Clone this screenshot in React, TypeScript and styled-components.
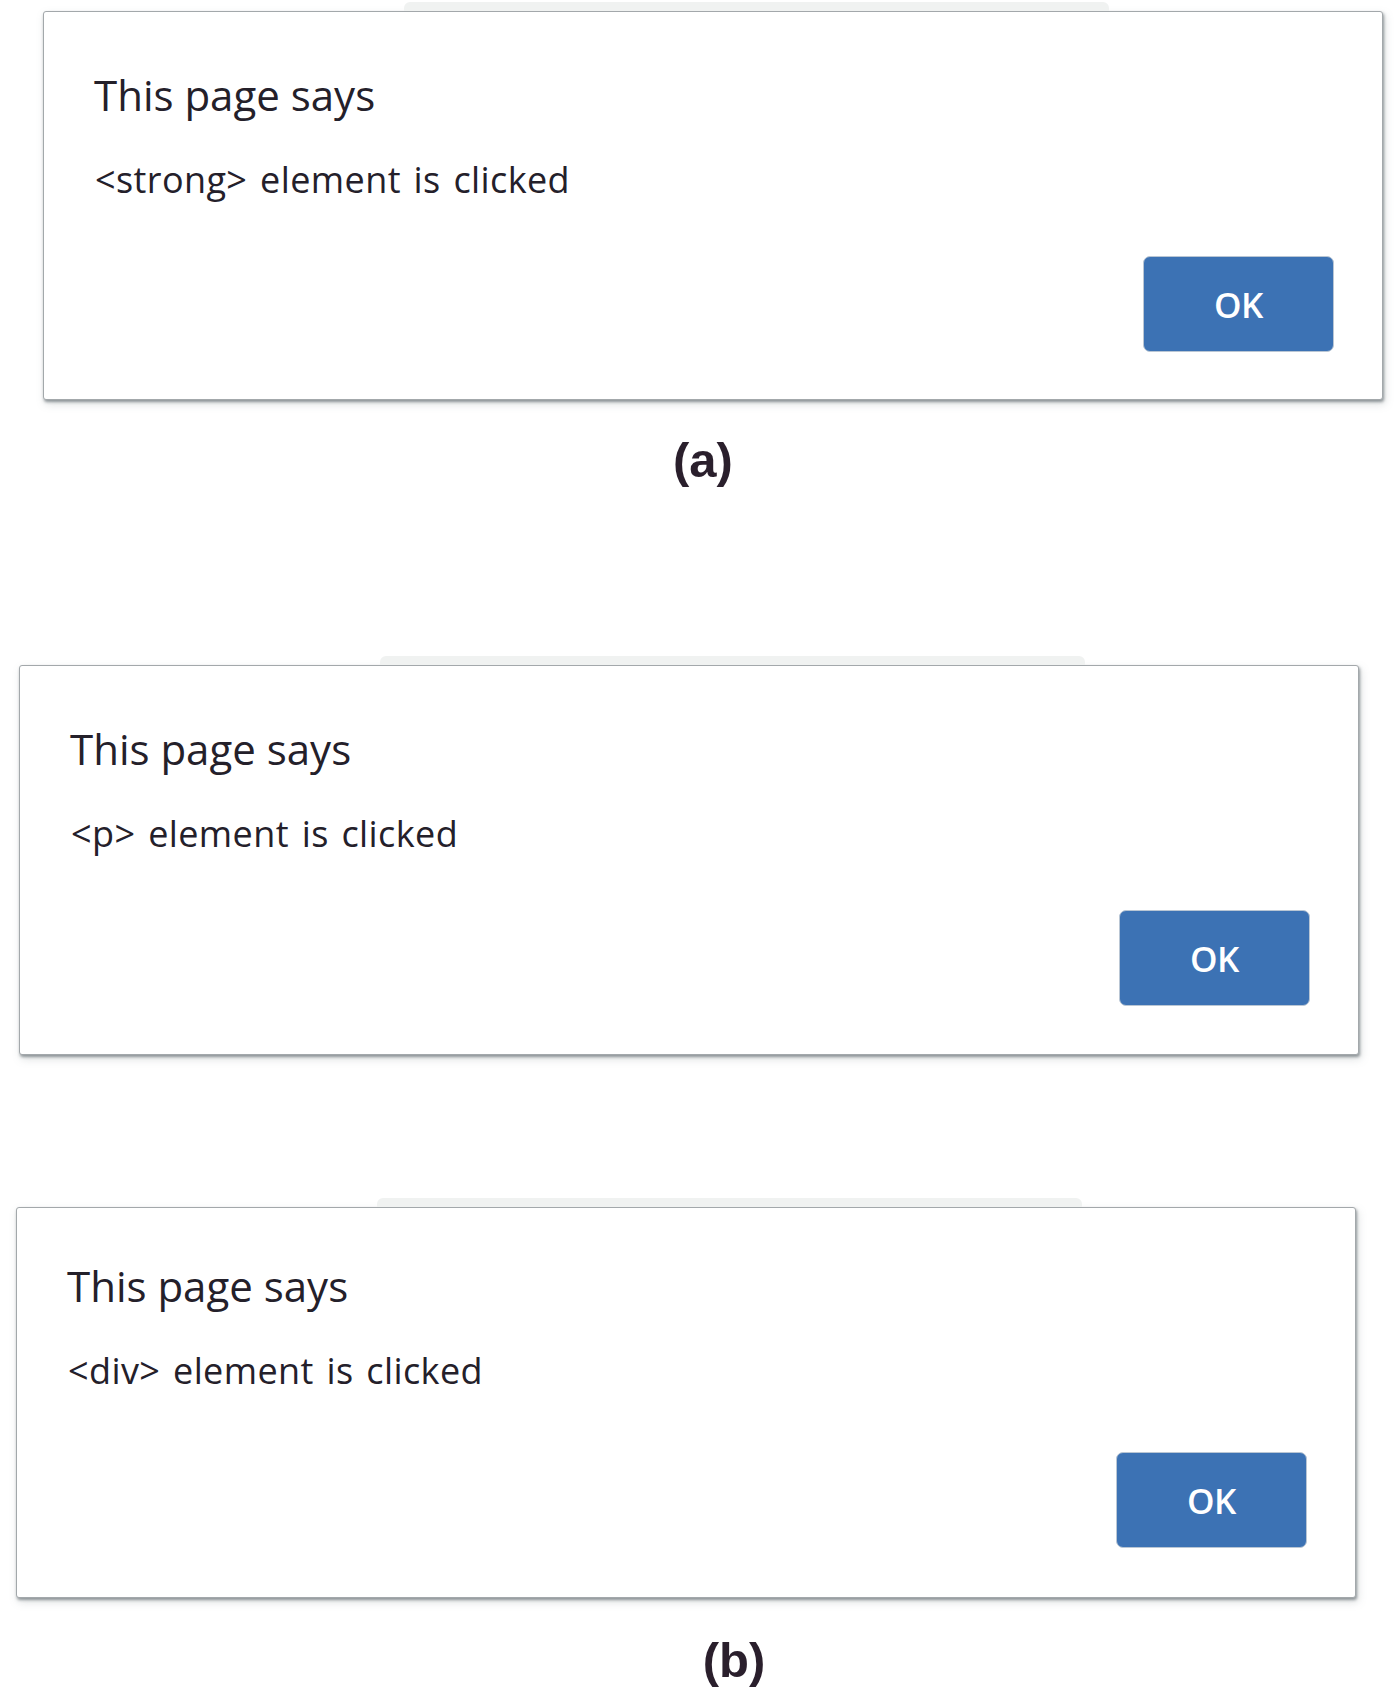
import React from "react";
import styled, { createGlobalStyle } from "styled-components";

const Global = createGlobalStyle`
  html, body { margin: 0; padding: 0; background: #ffffff; }
  body { font-family: "Open Sans", "Noto Sans", sans-serif; }
`;

const Page = styled.div`
  width: 1400px;
  height: 1687px;
  box-sizing: border-box;
  padding-top: 11px;
  display: flex;
  flex-direction: column;
  overflow: hidden;
`;

const Panel = styled.section<{ $left: number; $top: number; $h: number; $lift: number }>`
  position: relative;
  box-sizing: border-box;
  width: 1340px;
  height: ${(p) => p.$h}px;
  margin-left: ${(p) => p.$left}px;
  margin-top: ${(p) => p.$top}px;
  padding: ${(p) => 59 - p.$lift}px 48px 0 50px;
  background: #ffffff;
  border: 1px solid #a3a8ab;
  border-radius: 3px;
  box-shadow: 1px 2px 3px rgba(70, 80, 85, 0.55), 2px 4px 8px rgba(120, 130, 135, 0.25);
  display: flex;
  flex-direction: column;

  &::before {
    content: "";
    position: absolute;
    top: -10px;
    left: 360px;
    width: 705px;
    height: 9px;
    background: #f0f2f1;
    border-radius: 6px 6px 0 0;
  }
`;

const Title = styled.h2`
  margin: 0;
  font-family: "Open Sans", "Noto Sans", sans-serif;
  font-weight: 400;
  font-size: 42px;
  line-height: 48px;
  color: #24202a;
`;

const Message = styled.p`
  margin: 41px 0 0 1px;
  font-family: "Open Sans", "Noto Sans", sans-serif;
  font-weight: 400;
  font-size: 36px;
  line-height: 40px;
  color: #24202a;
  letter-spacing: 0.4px;
  word-spacing: 3px;
`;

const ButtonRow = styled.div<{ $lift: number }>`
  margin-top: ${(p) => 56 + p.$lift}px;
  display: flex;
  justify-content: flex-end;
`;

const OkButton = styled.button`
  width: 191px;
  height: 96px;
  border: 1px solid #b9c6d4;
  border-radius: 7px;
  background: #3c72b4;
  color: #ffffff;
  font-family: "Open Sans", "Noto Sans", sans-serif;
  font-weight: 600;
  font-size: 35px;
  letter-spacing: -0.5px;
  cursor: pointer;
  padding: 0;
`;

const Caption = styled.div<{ $top: number; $shift: number }>`
  margin-top: ${(p) => p.$top}px;
  height: 50px;
  line-height: 50px;
  text-align: center;
  padding-left: ${(p) => p.$shift * 2}px;
  font-family: "Liberation Sans", Arial, sans-serif;
  font-weight: 700;
  font-size: 49px;
  color: #2a1f2c;
`;

type Dialog = { tag: string; left: number; top: number; h: number; lift?: number };

const Alert = ({ tag, left, top, h, lift = 0 }: Dialog) => (
  <Panel $left={left} $top={top} $h={h} $lift={lift}>
    <Title>This page says</Title>
    <Message>{`<${tag}> element is clicked`}</Message>
    <ButtonRow $lift={lift}>
      <OkButton>OK</OkButton>
    </ButtonRow>
  </Panel>
);

export default function App() {
  return (
    <>
      <Global />
      <Page>
        <Alert tag="strong" left={43} top={0} h={389} />
        <Caption $top={35} $shift={3}>(a)</Caption>
        <Alert tag="p" left={19} top={180} h={390} />
        <Alert tag="div" left={16} top={152} h={391} lift={5} />
        <Caption $top={37} $shift={34}>(b)</Caption>
      </Page>
    </>
  );
}
